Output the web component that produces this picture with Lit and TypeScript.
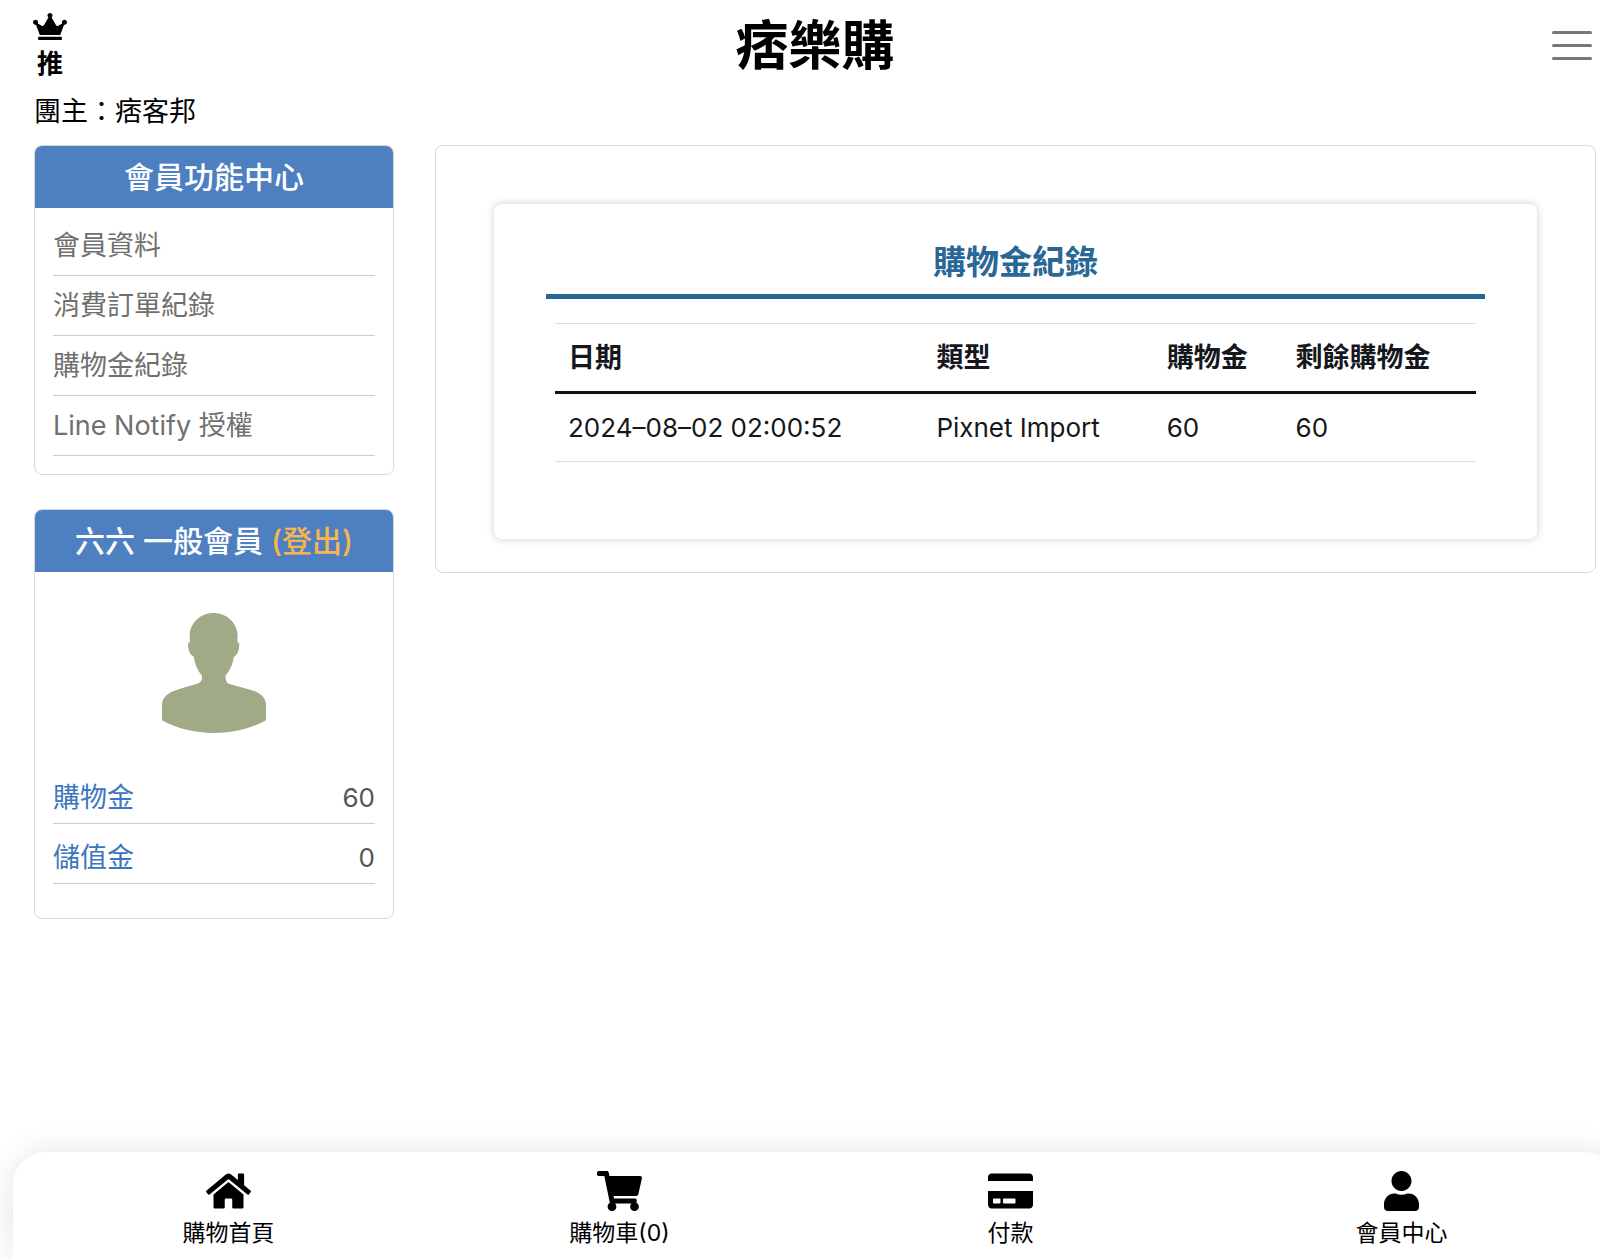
import { LitElement, html, css, svg } from "lit";
import { customElement, property } from "lit/decorators.js";

interface Icon {
  box: string;
  path: string;
}

const icons: Record<string, Icon> = {
  crown: {
    box: "0 0 640 512",
    path: "M528 448H112c-8.8 0-16 7.2-16 16v32c0 8.8 7.2 16 16 16h416c8.8 0 16-7.2 16-16v-32c0-8.8-7.2-16-16-16zm64-320c-26.5 0-48 21.5-48 48 0 7.1 1.6 13.7 4.4 19.8L476 239.2c-15.4 9.2-35.3 4-44.2-11.6L350.3 85C361 76.2 368 63 368 48c0-26.5-21.5-48-48-48s-48 21.5-48 48c0 15 7 28.2 17.7 37l-81.5 142.6c-8.9 15.6-28.9 20.8-44.2 11.6l-72.3-43.4c2.7-6 4.4-12.7 4.4-19.8 0-26.5-21.5-48-48-48S0 149.5 0 176s21.5 48 48 48c2.6 0 5.2-.4 7.7-.8L128 416h384l72.3-192.8c2.5.4 5.1.8 7.7.8 26.5 0 48-21.5 48-48s-21.5-48-48-48z",
  },
  home: {
    box: "0 0 576 512",
    path: "M280.37 148.26L96 300.11V464a16 16 0 0 0 16 16l112.06-.29a16 16 0 0 0 15.92-16V368a16 16 0 0 1 16-16h64a16 16 0 0 1 16 16v95.64a16 16 0 0 0 16 16.05L464 480a16 16 0 0 0 16-16V300L295.67 148.26a12.19 12.19 0 0 0-15.3 0zM571.6 251.47L488 182.56V44.05a12 12 0 0 0-12-12h-56a12 12 0 0 0-12 12v72.61L318.47 43a48 48 0 0 0-61 0L4.34 251.47a12 12 0 0 0-1.6 16.9l25.5 31A12 12 0 0 0 45.15 301l235.22-193.74a12.19 12.19 0 0 1 15.3 0L530.9 301a12 12 0 0 0 16.9-1.6l25.5-31a12 12 0 0 0-1.7-16.93z",
  },
  cart: {
    box: "0 0 576 512",
    path: "M528.12 301.319l47.273-208C578.806 78.301 567.391 64 551.99 64H159.208l-9.166-44.81C147.758 8.021 137.93 0 126.529 0H24C10.745 0 0 10.745 0 24v16c0 13.255 10.745 24 24 24h69.883l70.248 343.435C147.325 417.1 136 435.222 136 456c0 30.928 25.072 56 56 56s56-25.072 56-56c0-15.674-6.447-29.835-16.824-40h209.647C430.447 426.165 424 440.326 424 456c0 30.928 25.072 56 56 56s56-25.072 56-56c0-22.172-12.888-41.332-31.579-50.405l5.517-24.276c3.413-15.018-8.002-29.319-23.403-29.319H218.117l-6.545-32h293.145c11.206 0 20.92-7.754 23.403-18.681z",
  },
  card: {
    box: "0 0 576 512",
    path: "M0 432c0 26.5 21.5 48 48 48h480c26.5 0 48-21.5 48-48V256H0v176zm192-68c0-6.6 5.4-12 12-12h136c6.6 0 12 5.4 12 12v40c0 6.6-5.4 12-12 12H204c-6.6 0-12-5.4-12-12v-40zm-128 0c0-6.6 5.4-12 12-12h72c6.6 0 12 5.4 12 12v40c0 6.6-5.4 12-12 12H76c-6.6 0-12-5.4-12-12v-40zM576 80v48H0V80c0-26.5 21.5-48 48-48h480c26.5 0 48 21.5 48 48z",
  },
  user: {
    box: "0 0 448 512",
    path: "M224 256c70.7 0 128-57.3 128-128S294.7 0 224 0 96 57.3 96 128s57.3 128 128 128zm89.6 32h-16.7c-22.2 10.2-46.9 16-72.9 16s-50.6-5.8-72.9-16h-16.7C60.2 288 0 348.2 0 422.4V464c0 26.5 21.5 48 48 48h352c26.5 0 48-21.5 48-48v-41.6c0-74.2-60.2-134.4-134.4-134.4z",
  },
  avatar: {
    box: "123 99 312 360",
    path: "M277 99C318 99 350 129 350 168L349 187C355 186 356 192 354 203C352 217 346 228 339 229C336 250 328 272 313 287C315 298 313 308 328 313C352 321 380 326 402 334C425 344 435 358 435 375V421C390 446 335 459 279 459C223 459 168 446 123 421V375C123 358 133 344 156 334C178 325 205 318 229 311C243 306 244 296 243 287C229 272 221 250 218 229C211 228 204 217 202 203C200 192 201 186 207 187L206 168C206 129 238 99 277 99Z",
  },
};

const drawIcon = (name: string) =>
  html`<svg class="icon ${name}" viewBox=${icons[name].box} aria-hidden="true">
    ${svg`<path d=${icons[name].path}></path>`}
  </svg>`;

const menuItems = ["會員資料", "消費訂單紀錄", "購物金紀錄", "Line Notify 授權"];

const balances = [
  { label: "購物金", value: 60 },
  { label: "儲值金", value: 0 },
];

const records = [
  { date: "2024–08–02 02:00:52", type: "Pixnet Import", amount: 60, left: 60 },
];

const tabs = [
  { icon: "home", label: "購物首頁" },
  { icon: "cart", label: "購物車(0)" },
  { icon: "card", label: "付款" },
  { icon: "user", label: "會員中心" },
];

const base = css`
  * {
    box-sizing: border-box;
  }
  a {
    color: inherit;
    text-decoration: none;
  }
  .icon {
    display: block;
    fill: currentColor;
  }
`;

@customElement("side-card")
class SideCard extends LitElement {
  static styles = [
    base,
    css`
      :host {
        display: block;
        border: 1px solid #d8d8d8;
        border-radius: 8px;
        overflow: hidden;
      }
      .head {
        margin: 0;
        background: #4e80c1;
        color: #fff;
        font-size: 30px;
        font-weight: 500;
        line-height: 62px;
        text-align: center;
      }
    `,
  ];

  render() {
    return html`<h2 class="head"><slot name="title"></slot></h2>
      <slot></slot>`;
  }
}

@customElement("record-table")
class RecordTable extends LitElement {
  @property({ attribute: false }) rows = records;

  static styles = [
    base,
    css`
      :host {
        display: block;
        padding: 0 9px;
      }
      .table {
        width: 100%;
        table-layout: fixed;
        border-collapse: collapse;
        color: #14171b;
      }
      .date {
        width: 40%;
      }
      .type {
        width: 25%;
      }
      .amount {
        width: 14%;
      }
      .cell {
        height: 69px;
        padding: 0 13px;
        border-bottom: 1px solid #dcdee2;
        font-size: 26px;
        font-weight: 400;
        text-align: left;
      }
      .heading {
        padding-bottom: 4px;
        border-top: 1px solid #dcdee2;
        border-bottom: 3px solid #111;
        font-size: 27px;
        font-weight: 700;
      }
    `,
  ];

  render() {
    return html`<table class="table">
      <thead>
        <tr>
          <th class="cell heading date" scope="col">日期</th>
          <th class="cell heading type" scope="col">類型</th>
          <th class="cell heading amount" scope="col">購物金</th>
          <th class="cell heading" scope="col">剩餘購物金</th>
        </tr>
      </thead>
      <tbody>
        ${this.rows.map(
          (r) => html`<tr>
            <td class="cell">${r.date}</td>
            <td class="cell">${r.type}</td>
            <td class="cell">${r.amount}</td>
            <td class="cell">${r.left}</td>
          </tr>`
        )}
      </tbody>
    </table>`;
  }
}

@customElement("tab-bar")
class TabBar extends LitElement {
  static styles = [
    base,
    css`
      :host {
        display: block;
      }
      .bar {
        display: grid;
        grid-template-columns: repeat(4, 1fr);
        padding: 19px 20px 12px;
        background: #fff;
        border-radius: 33px 33px 0 0;
        box-shadow: 0 0 33px rgba(0, 0, 0, 0.11);
      }
      .tab {
        display: flex;
        flex-direction: column;
        align-items: center;
        gap: 8px;
        font-size: 23px;
        line-height: 28px;
      }
      .icon {
        height: 40px;
      }
    `,
  ];

  render() {
    return html`<nav class="bar">
      ${tabs.map((t) => html`<a class="tab" href="#">${drawIcon(t.icon)}<span>${t.label}</span></a>`)}
    </nav>`;
  }
}

@customElement("app-root")
class AppRoot extends LitElement {
  static styles = [
    base,
    css`
      :host {
        display: flex;
        flex-direction: column;
        min-height: 100vh;
        overflow: hidden;
        background: #fff;
        color: #000;
        font-family: Inter, "Noto Sans CJK TC", sans-serif;
        font-size: 27px;
      }
      .top {
        display: grid;
        grid-template-columns: 1fr auto 1fr;
        align-items: start;
        padding: 8px 3px 0 33px;
      }
      .promo {
        display: flex;
        flex-direction: column;
        align-items: center;
        justify-self: start;
        gap: 7px;
        padding-top: 5px;
        font-size: 26px;
        font-weight: 700;
        line-height: 34px;
      }
      .crown {
        width: 34px;
      }
      .brand {
        margin: 0;
        font-size: 53px;
        font-weight: 700;
        line-height: 76px;
      }
      .burger {
        display: flex;
        flex-direction: column;
        justify-self: end;
        gap: 10px;
        margin: 18px 0 0;
        padding: 5px;
        border: 0;
        background: none;
      }
      .line {
        width: 40px;
        height: 3px;
        border-radius: 2px;
        background: #777;
      }
      .owner {
        margin: 0;
        padding: 8px 34px 13px;
        line-height: 40px;
      }
      .layout {
        display: grid;
        grid-template-columns: 360px minmax(0, 1fr);
        gap: 41px;
        align-items: start;
        padding: 0 4px 34px 34px;
      }
      .side {
        display: grid;
        gap: 34px;
      }
      .list {
        margin: 0;
        padding: 8px 18px 18px;
        list-style: none;
        color: #707070;
      }
      .item {
        display: block;
        height: 60px;
        border-bottom: 1px solid #ccc;
        line-height: 60px;
      }
      .logout {
        color: #f5b54f;
      }
      .avatar {
        width: 104px;
        margin: 41px auto 31px;
        fill: #a0aa86;
      }
      .stats {
        margin: 0;
        padding: 0 18px 34px;
      }
      .stat {
        display: flex;
        justify-content: space-between;
        height: 60px;
        padding-top: 6px;
        border-bottom: 1px solid #ccc;
        line-height: 56px;
      }
      .name {
        color: #3b76bf;
      }
      .value {
        margin: 0;
        color: #555;
        font-size: 26px;
      }
      .panel {
        padding: 58px 58px 33px;
        border: 1px solid #d8d8d8;
        border-radius: 8px;
      }
      .sheet {
        padding: 38px 52px 77px;
        border-radius: 8px;
        box-shadow: 0 0 8px rgba(0, 0, 0, 0.2);
      }
      .title {
        margin: 0 0 24px;
        padding-bottom: 12px;
        border-bottom: 5px solid #296796;
        color: #296796;
        font-size: 33px;
        font-weight: 700;
        line-height: 40px;
        text-align: center;
      }
      .tabs {
        margin: auto -17px 0 13px;
      }
    `,
  ];

  render() {
    return html`
      <header class="top">
        <a class="promo" href="#">${drawIcon("crown")}<span>推</span></a>
        <h1 class="brand">痞樂購</h1>
        <button class="burger" type="button" aria-label="選單">
          <span class="line"></span><span class="line"></span><span class="line"></span>
        </button>
      </header>
      <p class="owner">團主：痞客邦</p>
      <div class="layout">
        <aside class="side">
          <side-card>
            <span slot="title">會員功能中心</span>
            <ul class="list">
              ${menuItems.map((m) => html`<li><a class="item" href="#">${m}</a></li>`)}
            </ul>
          </side-card>
          <side-card>
            <span slot="title">六六 一般會員 <a class="logout" href="#">(登出)</a></span>
            ${drawIcon("avatar")}
            <dl class="stats">
              ${balances.map(
                (b) => html`<div class="stat">
                  <dt class="name">${b.label}</dt>
                  <dd class="value">${b.value}</dd>
                </div>`
              )}
            </dl>
          </side-card>
        </aside>
        <main class="panel">
          <section class="sheet">
            <h2 class="title">購物金紀錄</h2>
            <record-table></record-table>
          </section>
        </main>
      </div>
      <tab-bar class="tabs"></tab-bar>
    `;
  }
}
